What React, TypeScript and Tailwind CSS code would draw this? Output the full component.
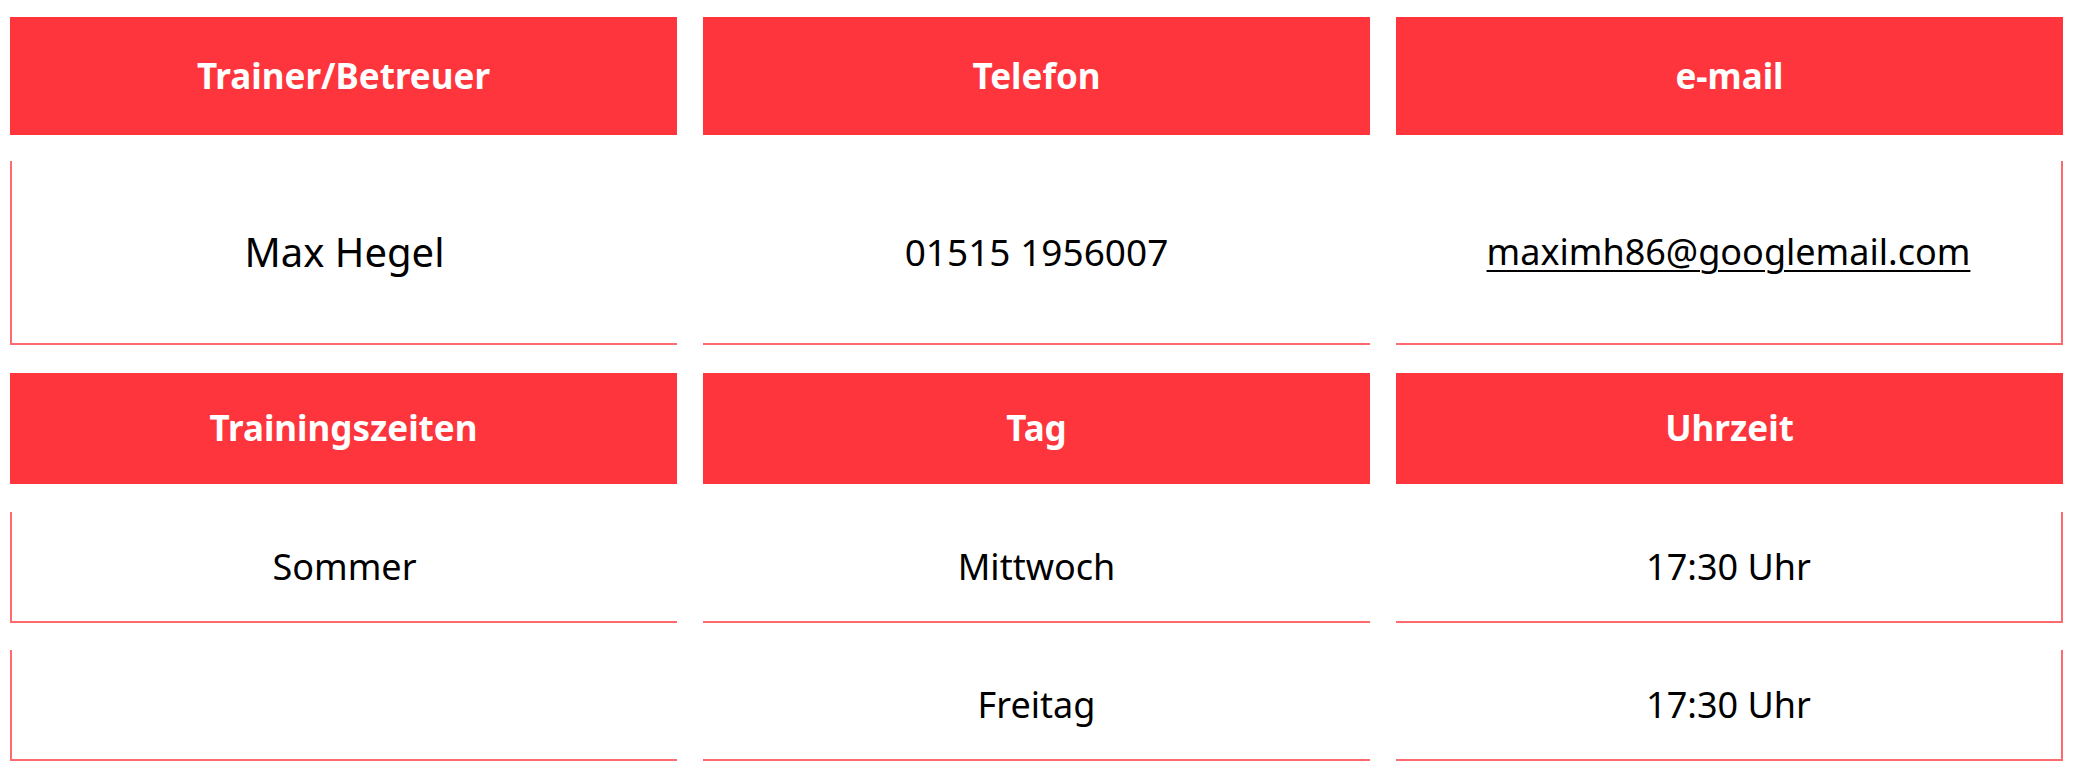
// Kontakt- und Trainingszeiten-Tabelle: drei Spalten, rote Kopfzeilen,
// darunter Zellen mit feiner roter Umrandung (links/unten/rechts).

const RED = 'bg-[#fe353c]'

type Cell = { text: string; href?: string; size?: string }

function HeaderRow({ labels, className }: { labels: string[]; className: string }) {
  return (
    <div className={`grid grid-cols-3 gap-x-[26px] ${className}`}>
      {labels.map((label) => (
        <div
          key={label}
          className={`flex items-center justify-center ${RED} text-[35px] font-bold text-white`}
        >
          {label}
        </div>
      ))}
    </div>
  )
}

// Column 1 gets a left edge, column 3 a right edge, all of them a bottom line.
const edge = ['border-l-2', '', 'border-r-2']

function BodyRow({ cells, className }: { cells: Cell[]; className: string }) {
  return (
    <div className={`grid grid-cols-3 gap-x-[26px] ${className}`}>
      {cells.map((cell, i) => (
        <div
          key={i}
          className={`flex items-center justify-center border-b-2 border-[#ff6a6f] ${edge[i]} ${cell.size ?? 'text-[36px]'} text-black`}
        >
          {cell.href ? (
            <a href={cell.href} className="underline decoration-[2px] underline-offset-[5px]">
              {cell.text}
            </a>
          ) : (
            cell.text
          )}
        </div>
      ))}
    </div>
  )
}

export default function App() {
  return (
    <div className="min-h-[772px] w-[2078px] bg-white pl-[10px] pt-[17px] font-['Noto_Sans',sans-serif]">
      <div className="flex w-[2053px] flex-col">
        <HeaderRow labels={['Trainer/Betreuer', 'Telefon', 'e-mail']} className="h-[118px]" />
        <BodyRow
          className="mt-[26px] h-[184px]"
          cells={[
            { text: 'Max Hegel', size: 'text-[40px]' },
            { text: '01515 1956007', size: 'text-[37px]' },
            { text: 'maximh86@googlemail.com', href: 'mailto:maximh86@googlemail.com' },
          ]}
        />
        <HeaderRow labels={['Trainingszeiten', 'Tag', 'Uhrzeit']} className="mt-[28px] h-[111px]" />
        <BodyRow
          className="mt-[28px] h-[111px]"
          cells={[{ text: 'Sommer' }, { text: 'Mittwoch' }, { text: '17:30 Uhr' }]}
        />
        <BodyRow
          className="mt-[27px] h-[111px]"
          cells={[{ text: '' }, { text: 'Freitag' }, { text: '17:30 Uhr' }]}
        />
      </div>
    </div>
  )
}
